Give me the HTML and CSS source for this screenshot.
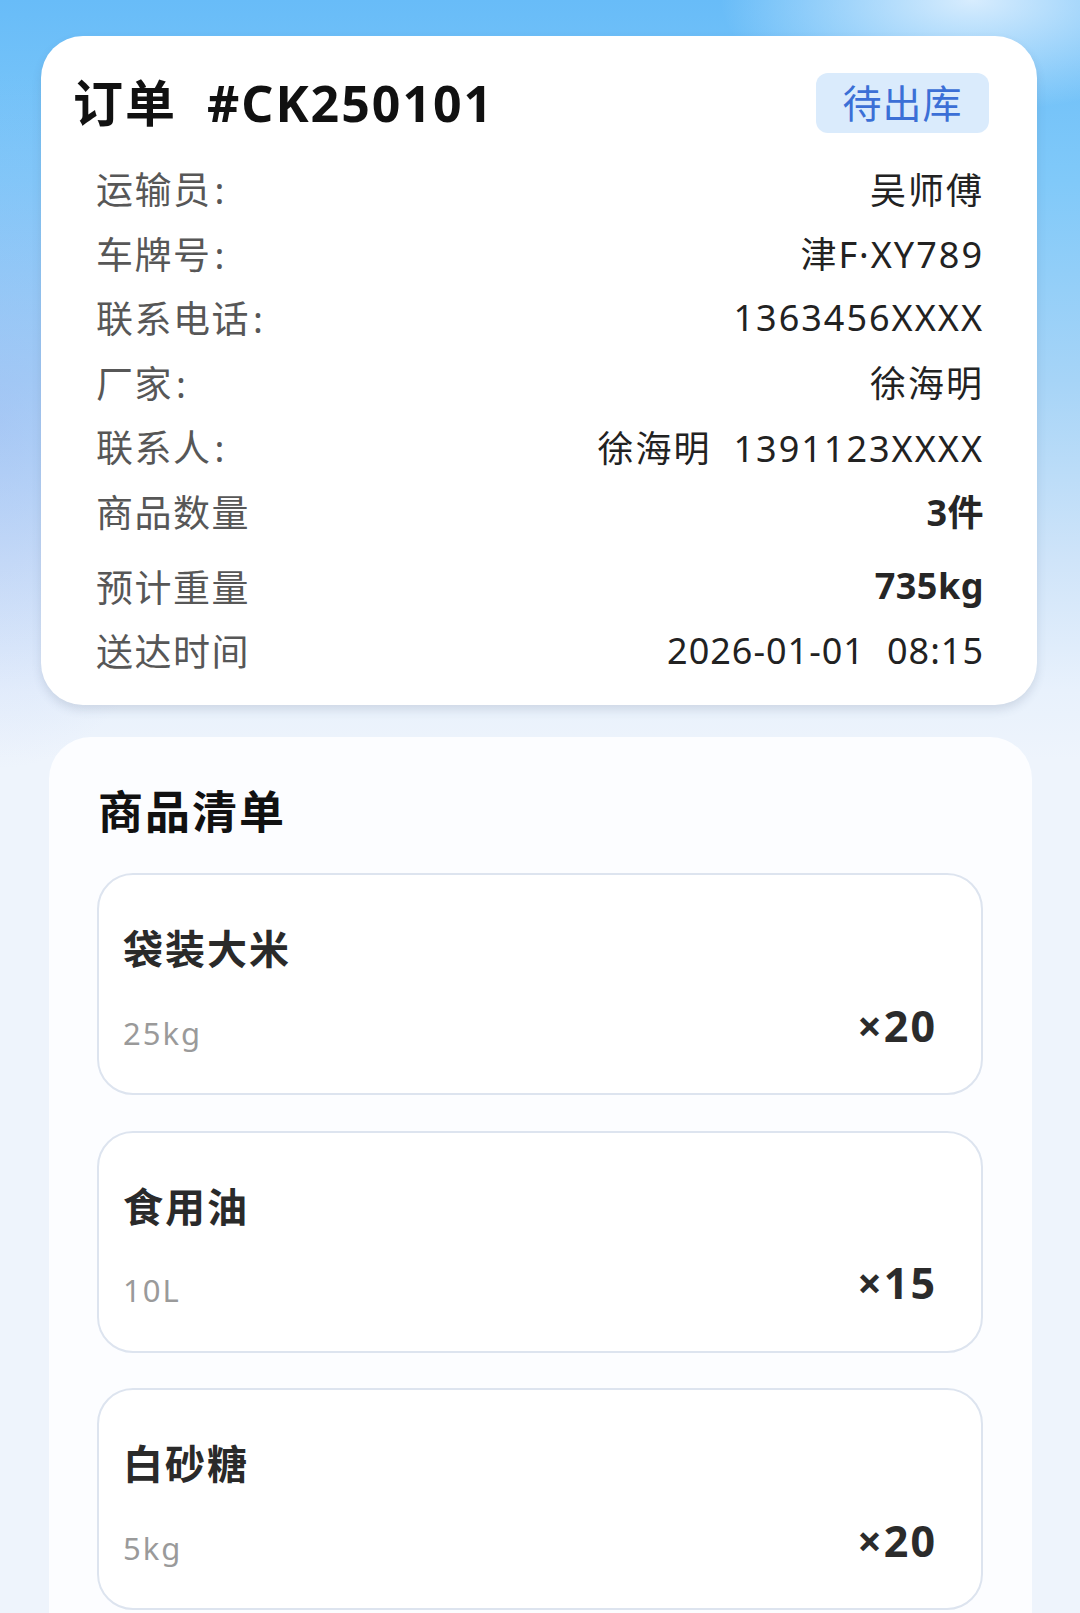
FILE: index.html
```html
<!DOCTYPE html>
<html lang="zh-CN">
<head>
<meta charset="utf-8">
<title>订单 #CK250101</title>
<link rel="stylesheet" href="styles.css">
</head>
<body>
<div class="page">
  <section class="card order">
    <div class="order-head">
      <h1 class="order-title">订单<span class="order-no">#CK250101</span></h1>
      <span class="badge">待出库</span>
    </div>
    <dl class="info">
      <div class="row"><dt>运输员<span class="colon">:</span></dt><dd>吴师傅</dd></div>
      <div class="row"><dt>车牌号<span class="colon">:</span></dt><dd>津F·XY789</dd></div>
      <div class="row"><dt>联系电话<span class="colon">:</span></dt><dd>1363456XXXX</dd></div>
      <div class="row"><dt>厂家<span class="colon">:</span></dt><dd>徐海明</dd></div>
      <div class="row"><dt>联系人<span class="colon">:</span></dt><dd>徐海明<span class="sep"></span>1391123XXXX</dd></div>
      <div class="row"><dt>商品数量</dt><dd class="strong">3件</dd></div>
      <div class="row row-gap"><dt>预计重量</dt><dd class="strong">735kg</dd></div>
      <div class="row"><dt>送达时间</dt><dd class="date">2026-01-01<span class="sep-sm"></span>08:15</dd></div>
    </dl>
  </section>

  <section class="card goods">
    <h2 class="goods-title">商品清单</h2>
    <ul class="items">
      <li class="item">
        <div class="item-name">袋装大米</div>
        <div class="item-foot"><span class="item-spec">25kg</span><span class="item-qty">×20</span></div>
      </li>
      <li class="item">
        <div class="item-name">食用油</div>
        <div class="item-foot"><span class="item-spec">10L</span><span class="item-qty">×15</span></div>
      </li>
      <li class="item">
        <div class="item-name">白砂糖</div>
        <div class="item-foot"><span class="item-spec">5kg</span><span class="item-qty">×20</span></div>
      </li>
    </ul>
  </section>
</div>
</body>
</html>
```

FILE: styles.css
```css
* { box-sizing: border-box; }

html, body {
  margin: 0;
  padding: 0;
}

body {
  min-height: 1613px;
  font-family: "Noto Sans", "Noto Sans CJK SC", sans-serif;
  letter-spacing: 2px;
  color: #222;
  background-color: #eef4fc;
  background-image:
    radial-gradient(ellipse 360px 160px at 90% 0%, rgba(235, 245, 255, 0.85), rgba(235, 245, 255, 0) 70%),
    radial-gradient(ellipse 300px 500px at 0% 420px, rgba(150, 170, 240, 0.35), rgba(150, 170, 240, 0) 70%),
    linear-gradient(180deg, #68bcf8 0px, #80c9f9 180px, #a6d4f7 380px, #cfe4f9 560px, #e8f1fc 690px, #eef4fc 760px);
  background-repeat: no-repeat;
  overflow: hidden;
}

.page {
  padding: 36px 43px 0 41px;
}

.card {
  background: #fff;
  border-radius: 42px;
}

/* ---------- order card ---------- */
.order {
  padding: 37px 0 23px;
  box-shadow: 0 5px 10px rgba(70, 90, 120, 0.16);
}

.order-head {
  display: flex;
  align-items: center;
  justify-content: space-between;
  height: 60px;
  padding: 0 48px 0 32px;
}

.order-title {
  margin: 0;
  font-size: 50px;
  line-height: 60px;
  font-weight: 700;
  color: #111;
  letter-spacing: 2px;
}

.order-no {
  margin-left: 30px;
}

.badge {
  width: 173px;
  height: 60px;
  border-radius: 12px;
  background: #daebfc;
  color: #3b6fd6;
  font-size: 39px;
  line-height: 60px;
  letter-spacing: 1px;
  text-align: center;
}

.info {
  margin: 22.75px 0 0;
  padding: 0 53px 0 55px;
}

.row {
  display: flex;
  justify-content: space-between;
  align-items: center;
  height: 64.5px;
  font-size: 36px;
}

.row-gap {
  margin-top: 10.5px;
}

.row dt {
  color: #575757;
  font-size: 37px;
  letter-spacing: 1.5px;
}

.colon {
  margin-left: 3px;
}

.row dd {
  margin: 0;
  color: #222;
}

.row dd.strong {
  font-weight: 700;
  color: #262626;
  letter-spacing: 0.5px;
}

.row dd.date {
  letter-spacing: 1px;
}

.sep {
  display: inline-block;
  width: 22px;
}

.sep-sm {
  display: inline-block;
  width: 22px;
}

/* ---------- goods card ---------- */
.goods {
  margin: 32px 5px 0 8px;
  padding: 45px 49px 80px 48px;
  background: #fcfdff;
}

.goods-title {
  margin: 0 0 0 1px;
  font-size: 45px;
  line-height: 60px;
  font-weight: 700;
  color: #111;
}

.items {
  list-style: none;
  margin: 31px 0 0;
  padding: 0;
  display: flex;
  flex-direction: column;
  gap: 35.5px;
}

.item {
  height: 222px;
  border: 2px solid #dde4ef;
  border-radius: 36px;
  background: #fff;
  padding: 49px 44px 0 24px;
}

.item-name {
  font-size: 40px;
  line-height: 50px;
  font-weight: 700;
  color: #2a2a2a;
}

.item-foot {
  display: flex;
  justify-content: space-between;
  align-items: flex-start;
  margin-top: 29.5px;
}

.item-spec {
  margin-top: 7px;
  font-size: 31px;
  line-height: 44px;
  color: #9a9a9a;
}

.item-qty {
  font-size: 43px;
  line-height: 44px;
  font-weight: 700;
  color: #2b2b2b;
}
```
